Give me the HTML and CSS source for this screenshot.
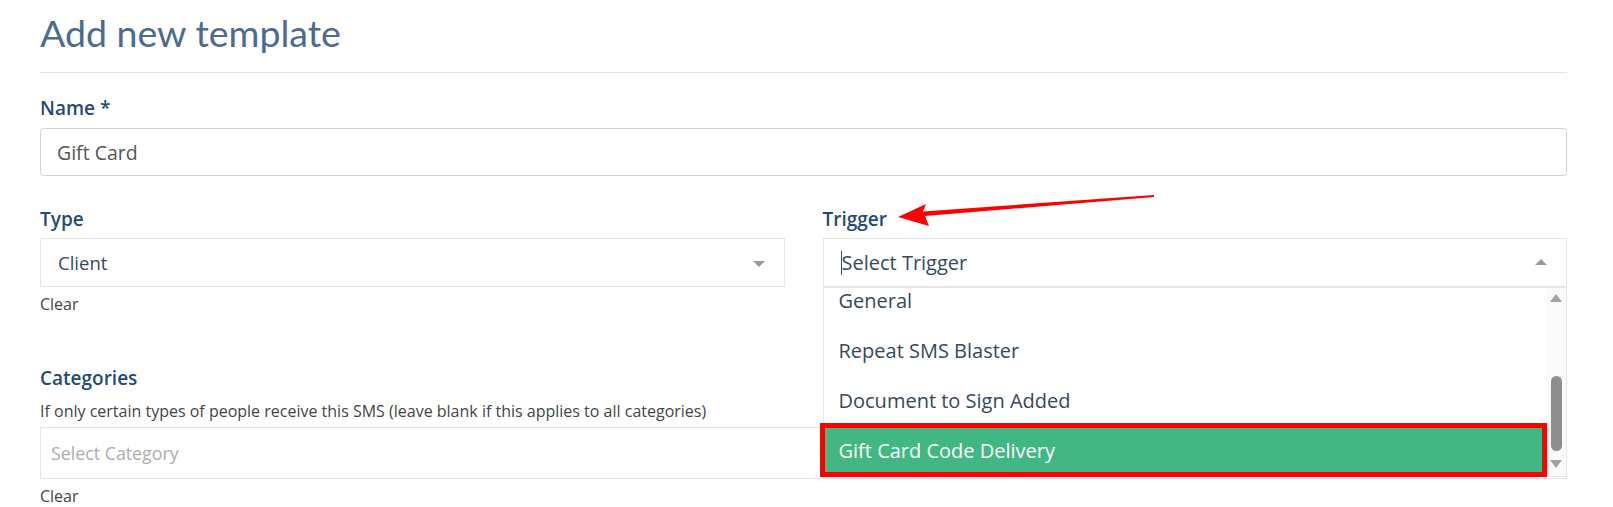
FILE: index.html
```html
<!DOCTYPE html>
<html lang="en">
<head>
<meta charset="utf-8">
<title>Add new template</title>
<link rel="stylesheet" href="styles.css">
</head>
<body>
<div class="page">
  <h1 class="title">Add new template</h1>
  <div class="rule"></div>

  <div class="field">
    <label class="label">Name *</label>
    <div class="text-input">Gift Card</div>
  </div>

  <div class="row">
    <div class="col">
      <label class="label">Type</label>
      <div class="select">
        <span class="value value-sm">Client</span>
        <span class="caret caret-down"></span>
      </div>
      <a class="clear">Clear</a>
    </div>
    <div class="col">
      <label class="label">Trigger</label>
      <div class="select select-open">
        <span class="cursor"></span><span class="value">Select Trigger</span>
        <span class="caret caret-up"></span>
        <div class="dropdown">
          <div class="options">
            <div class="option">General</div>
            <div class="option">Repeat SMS Blaster</div>
            <div class="option">Document to Sign Added</div>
            <div class="option option-active">Gift Card Code Delivery</div>
          </div>
          <div class="scrollbar">
            <span class="sb-arrow sb-up"></span>
            <span class="sb-thumb"></span>
            <span class="sb-arrow sb-down"></span>
          </div>
          <div class="highlight-box"></div>
        </div>
      </div>
    </div>
  </div>

  <div class="field categories">
    <label class="label">Categories</label>
    <p class="help">If only certain types of people receive this SMS (leave blank if this applies to all categories)</p>
    <div class="select select-cat">
      <span class="placeholder">Select Category</span>
    </div>
    <a class="clear">Clear</a>
  </div>

  <svg class="annot-arrow" width="300" height="50" viewBox="880 185 300 50" xmlns="http://www.w3.org/2000/svg">
    <polygon points="898,217 926,204 923,211.5 1154,195 1154,197 925,216 929,226" fill="#ff0000"/>
  </svg>
</div>
</body>
</html>
```
FILE: styles.css
```css
* { box-sizing: border-box; }

html, body {
  margin: 0;
  padding: 0;
  background: #ffffff;
}

body {
  font-family: "Open Sans", "Noto Sans", "DejaVu Sans", sans-serif;
  color: #35495e;
}

.page {
  position: relative;
  padding: 9px 46px 0 40px;
  width: 1613px;
}

.title {
  margin: 0;
  font-family: Lato, "Open Sans", sans-serif;
  font-size: 37.5px;
  line-height: 48px;
  font-weight: 400;
  color: #4b6b8f;
}

.rule {
  margin-top: 15px;
  height: 1px;
  background: #e4e4e4;
}

.label {
  display: block;
  font-size: 19px;
  line-height: 22px;
  font-weight: 600;
  color: #1f4b75;
}

.field > .label {
  margin-top: 24px;
}

.text-input {
  margin-top: 9px;
  height: 48px;
  border: 1px solid #cdd4dd;
  border-radius: 4px;
  padding: 0 16px;
  display: flex;
  align-items: center;
  font-size: 19.5px;
  color: #555555;
}

.row {
  display: grid;
  grid-template-columns: 1fr 1fr;
  column-gap: 38px;
  margin-top: 32px;
}

.col {
  display: flex;
  flex-direction: column;
  align-items: flex-start;
}

.select {
  position: relative;
  margin-top: 8px;
  width: 100%;
  height: 49px;
  border: 1px solid #e6e6e6;
  display: flex;
  align-items: center;
  padding: 0 17px;
  font-size: 20px;
  color: #35495e;
}

.value-sm {
  font-size: 18.5px;
}

.cursor {
  width: 1px;
  height: 24px;
  background: #35495e;
}

.caret {
  position: absolute;
  right: 19px;
  top: 50%;
  width: 0;
  height: 0;
  border-left: 6px solid transparent;
  border-right: 6px solid transparent;
}

.caret-down {
  margin-top: -2px;
  border-top: 6px solid #999999;
}

.caret-up {
  margin-top: -4px;
  border-bottom: 6px solid #999999;
}

.dropdown {
  position: absolute;
  left: -1px;
  right: -1px;
  top: 48px;
  height: 190px;
  background: #ffffff;
  border: 1px solid #e6e6e6;
  display: flex;
  z-index: 2;
}

.options {
  flex: 1;
  overflow: hidden;
  position: relative;
}

.option {
  height: 50px;
  display: flex;
  align-items: center;
  padding: 0 15px;
  font-size: 20px;
  color: #35495e;
}

.option:first-child {
  margin-top: -13px;
}

.option-active {
  background: #41b883;
  color: #ffffff;
}

.scrollbar {
  position: relative;
  width: 20px;
  background: #fafafa;
  display: flex;
  flex-direction: column;
  align-items: center;
}

.sb-arrow {
  width: 0;
  height: 0;
  border-left: 6px solid transparent;
  border-right: 6px solid transparent;
}

.sb-up {
  margin-top: 6px;
  border-bottom: 8px solid #a3a3a3;
}

.sb-thumb {
  margin-top: 74px;
  width: 11px;
  height: 75px;
  border-radius: 6px;
  background: #8e8e8e;
}

.sb-down {
  margin-top: 9px;
  border-top: 8px solid #a3a3a3;
}

.highlight-box {
  position: absolute;
  left: -4px;
  right: 19px;
  top: 135px;
  height: 54px;
  border: 5px solid #ff0000;
  pointer-events: none;
}

.clear {
  margin-top: 8px;
  font-size: 16px;
  line-height: 18px;
  color: #444444;
}

.categories > .label {
  margin-top: 54px;
}

.help {
  margin: 13px 0 0;
  font-size: 16px;
  line-height: 18px;
  color: #444444;
}

.select-cat {
  margin-top: 7px;
  height: 52px;
  padding: 0 10px;
  font-size: 17.8px;
}

.placeholder {
  color: #adadad;
}

.categories .clear {
  display: block;
  margin-top: 8px;
}

.annot-arrow {
  position: absolute;
  left: 880px;
  top: 185px;
  z-index: 3;
}
```
